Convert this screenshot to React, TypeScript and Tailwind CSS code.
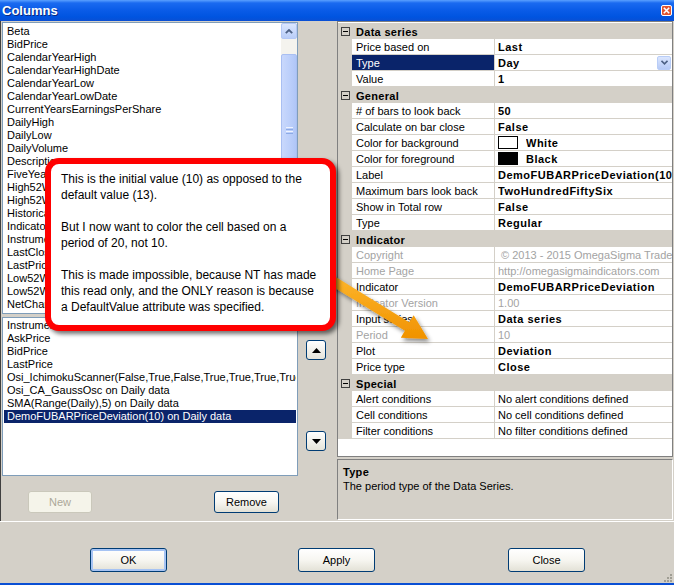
import React from "react";

type Prop = {
  name: string;
  value: string;
  bold?: boolean;
  grey?: boolean;
  selected?: boolean;
  dropdown?: boolean;
  swatch?: string;
};

type Section = { title: string; rows: Prop[] };

const topItems = [
  "Beta",
  "BidPrice",
  "CalendarYearHigh",
  "CalendarYearHighDate",
  "CalendarYearLow",
  "CalendarYearLowDate",
  "CurrentYearsEarningsPerShare",
  "DailyHigh",
  "DailyLow",
  "DailyVolume",
  "Description",
  "FiveYearGrowthPercent",
  "High52Weeks",
  "High52WeeksDate",
  "HistoricalVolatility",
  "IndicatorName",
  "InstrumentName",
  "LastClose",
  "LastPrice",
  "Low52Weeks",
  "Low52WeeksDate",
  "NetChange",
  "NetChangePercent",
];

const bottomItems = [
  "Instrument",
  "AskPrice",
  "BidPrice",
  "LastPrice",
  "Osi_IchimokuScanner(False,True,False,True,True,True,True,False) on Daily data",
  "Osi_CA_GaussOsc on Daily data",
  "SMA(Range(Daily),5) on Daily data",
  "DemoFUBARPriceDeviation(10) on Daily data",
];

const sections: Section[] = [
  {
    title: "Data series",
    rows: [
      { name: "Price based on", value: "Last", bold: true },
      { name: "Type", value: "Day", bold: true, selected: true, dropdown: true },
      { name: "Value", value: "1", bold: true },
    ],
  },
  {
    title: "General",
    rows: [
      { name: "# of bars to look back", value: "50", bold: true },
      { name: "Calculate on bar close", value: "False", bold: true },
      { name: "Color for background", value: "White", bold: true, swatch: "white" },
      { name: "Color for foreground", value: "Black", bold: true, swatch: "black" },
      { name: "Label", value: "DemoFUBARPriceDeviation(10) on Daily data", bold: true },
      { name: "Maximum bars look back", value: "TwoHundredFiftySix", bold: true },
      { name: "Show in Total row", value: "False", bold: true },
      { name: "Type", value: "Regular", bold: true },
    ],
  },
  {
    title: "Indicator",
    rows: [
      { name: "Copyright", value: "\u00a0© 2013 - 2015 OmegaSigma Tradecraft", grey: true },
      { name: "Home Page", value: "http://omegasigmaindicators.com", grey: true },
      { name: "Indicator", value: "DemoFUBARPriceDeviation", bold: true },
      { name: "Indicator Version", value: "1.00", grey: true },
      { name: "Input series", value: "Data series", bold: true },
      { name: "Period", value: "10", grey: true },
      { name: "Plot", value: "Deviation", bold: true },
      { name: "Price type", value: "Close", bold: true },
    ],
  },
  {
    title: "Special",
    rows: [
      { name: "Alert conditions", value: "No alert conditions defined" },
      { name: "Cell conditions", value: "No cell conditions defined" },
      { name: "Filter conditions", value: "No filter conditions defined" },
    ],
  },
];

function XpButton({
  label,
  width,
  disabled,
  isDefault,
}: {
  label: string;
  width: string;
  disabled?: boolean;
  isDefault?: boolean;
}) {
  if (disabled) {
    return (
      <div
        className={`${width} h-full flex items-center justify-center rounded-[3px] border border-[#cac8bb] bg-[#f5f4ea] text-[#aca899]`}
      >
        {label}
      </div>
    );
  }
  return (
    <div
      className={`${width} h-full flex items-center justify-center rounded-[3px] border border-[#003c74] bg-gradient-to-b from-white via-[#f7f6f1] to-[#e3e1d6] ${
        isDefault ? "shadow-[inset_0_0_0_2px_#a6c3f3]" : ""
      }`}
    >
      {label}
    </div>
  );
}

function ArrowButton({ up }: { up?: boolean }) {
  return (
    <div className="w-[20px] h-[20px] flex items-center justify-center rounded-[3px] border border-[#003c74] bg-gradient-to-b from-white to-[#e6e4da]">
      <svg width="9" height="5" viewBox="0 0 9 5">
        {up ? <polygon points="0,5 9,5 4.5,0" fill="#000" /> : <polygon points="0,0 9,0 4.5,5" fill="#000" />}
      </svg>
    </div>
  );
}

function PropRow({ p }: { p: Prop }) {
  return (
    <div className="flex h-[16px]">
      <div className="w-[14px] bg-[#d4d0c8]" />
      <div
        className={`w-[143px] border-b border-r border-[#d4d0c8] pl-[4px] pt-[2px] leading-[13px] whitespace-nowrap overflow-hidden ${
          p.selected ? "bg-[#0a246a] text-white" : p.grey ? "text-[#a3a3a3]" : "text-black"
        }`}
      >
        {p.name}
      </div>
      <div className="flex-1 min-w-0 flex items-center border-b border-[#d4d0c8] pl-[3px] whitespace-nowrap overflow-hidden">
        {p.swatch === "white" && (
          <div className="w-[20px] h-[13px] mr-[8px] shrink-0 border border-black bg-white" />
        )}
        {p.swatch === "black" && <div className="w-[20px] h-[13px] mr-[8px] shrink-0 bg-black" />}
        <span
          className={`flex-1 min-w-0 overflow-hidden pt-[2px] leading-[13px] ${
            p.bold ? "font-bold tracking-[0.5px]" : ""
          } ${p.grey ? "text-[#a3a3a3]" : "text-black"}`}
        >
          {p.value}
        </span>
        {p.dropdown && (
          <div className="w-[14px] h-[14px] mr-[1px] shrink-0 flex items-center justify-center rounded-[2px] border border-[#b9cdf7] bg-gradient-to-b from-[#dbe6fe] to-[#b6caf6]">
            <svg width="7" height="5" viewBox="0 0 7 5">
              <polyline points="0.5,0.8 3.5,3.8 6.5,0.8" fill="none" stroke="#4d6185" strokeWidth="1.6" />
            </svg>
          </div>
        )}
      </div>
    </div>
  );
}

function CategoryRow({ title }: { title: string }) {
  return (
    <div className="flex h-[16px] items-center bg-[#d4d0c8]">
      <div className="ml-[3px] w-[9px] h-[9px] shrink-0 flex items-center justify-center border border-[#404040]">
        <div className="w-[5px] h-px bg-black" />
      </div>
      <span className="ml-[6px] pt-[2px] leading-[13px] font-bold tracking-[0.3px]">{title}</span>
    </div>
  );
}

export default function App() {
  return (
    <div className="relative w-[674px] h-[585px] overflow-hidden flex flex-col bg-[#d4d0c8] text-[11px] text-black font-['Liberation_Sans',Arial,sans-serif]">
      {/* Title bar */}
      <div className="h-[21px] shrink-0 flex items-center justify-between bg-[linear-gradient(to_bottom,#5aa0ff_0px,#1a6af0_3px,#0a5ce8_10px,#0054e0_17px,#0a4fd4_21px)]">
        <span className="pl-[2px] text-[13px] font-bold text-white [text-shadow:1px_1px_0_#0a2a80]">Columns</span>
        <div className="mr-[2px] w-[11px] h-[11px] flex items-center justify-center rounded-[2px] border border-white bg-[#e2542e]">
          <svg width="7" height="7" viewBox="0 0 7 7">
            <path d="M0.8 0.8 L6.2 6.2 M6.2 0.8 L0.8 6.2" stroke="white" strokeWidth="1.6" />
          </svg>
        </div>
      </div>

      {/* Main split area */}
      <div className="h-[501px] shrink-0 flex border-b border-white">
        {/* Left panel */}
        <div className="w-[337px] shrink-0 flex border-l border-[#404040]">
          <div className="ml-[1px] w-[296px] flex flex-col pt-[1px]">
            {/* Available columns */}
            <div className="h-[292px] flex border border-[#7f9db9] bg-white">
              <div className="flex-1 min-w-0 overflow-hidden pt-[2px] pl-[4px]">
                {topItems.map((item) => (
                  <div key={item} className="h-[13px] leading-[13px] whitespace-nowrap">
                    {item}
                  </div>
                ))}
              </div>
              <div className="w-[16px] shrink-0 flex flex-col bg-[#f4f3ee]">
                <div className="h-[16px] flex items-center justify-center rounded-[2px] border border-[#b4c8f6] bg-gradient-to-b from-[#dce7fe] to-[#b9cdf8]">
                  <svg width="8" height="5" viewBox="0 0 8 5">
                    <polyline points="0.8,4.2 4,1 7.2,4.2" fill="none" stroke="#4d6185" strokeWidth="1.8" />
                  </svg>
                </div>
                <div className="h-[15px]" />
                <div className="h-[152px] flex items-center justify-center rounded-[2px] border border-[#a9bff2] bg-gradient-to-r from-[#c9d8fc] via-[#bdd0fb] to-[#b0c6f7]">
                  <div className="flex flex-col gap-[1px]">
                    <div className="w-[7px] h-px bg-[#eef3fe]" />
                    <div className="w-[7px] h-px bg-[#8caae6]" />
                    <div className="w-[7px] h-px bg-[#eef3fe]" />
                    <div className="w-[7px] h-px bg-[#8caae6]" />
                  </div>
                </div>
                <div className="flex-1" />
                <div className="h-[16px] flex items-center justify-center rounded-[2px] border border-[#b4c8f6] bg-gradient-to-b from-[#dce7fe] to-[#b9cdf8]">
                  <svg width="8" height="5" viewBox="0 0 8 5">
                    <polyline points="0.8,0.8 4,4 7.2,0.8" fill="none" stroke="#4d6185" strokeWidth="1.8" />
                  </svg>
                </div>
              </div>
            </div>

            {/* Selected columns */}
            <div className="mt-[3px] h-[159px] border border-[#7f9db9] bg-white overflow-hidden pt-[1px] px-[1px]">
              {bottomItems.map((item, i) => (
                <div
                  key={item}
                  className={`h-[13px] leading-[13px] pl-[3px] whitespace-nowrap overflow-hidden ${
                    i === bottomItems.length - 1 ? "bg-[#0a246a] text-white" : ""
                  }`}
                >
                  {item}
                </div>
              ))}
            </div>

            <div className="mt-[15px] h-[22px] flex">
              <div className="ml-[26px]">
                <XpButton label="New" width="w-[64px]" disabled />
              </div>
              <div className="ml-[122px]">
                <XpButton label="Remove" width="w-[65px]" />
              </div>
            </div>
          </div>

          {/* Move up / down */}
          <div className="flex-1 flex flex-col pl-[8px] pt-[319px]">
            <ArrowButton up />
            <div className="mt-[71px]">
              <ArrowButton />
            </div>
          </div>
        </div>

        {/* Right panel: property grid */}
        <div className="flex-1 min-w-0 flex flex-col pr-[1px]">
          <div className="h-[436px] flex flex-col border border-[#808080] bg-white overflow-hidden pt-[1px]">
            {sections.map((s) => (
              <div key={s.title}>
                <CategoryRow title={s.title} />
                {s.rows.map((r) => (
                  <PropRow key={s.title + r.name} p={r} />
                ))}
              </div>
            ))}
          </div>
          <div className="mt-[2px] h-[61px] border border-t-[#808080] border-l-[#808080] border-b-white border-r-white pl-[5px] pt-[5px]">
            <div className="font-bold leading-[14px] tracking-[0.3px]">Type</div>
            <div className="leading-[14px]">The period type of the Data Series.</div>
          </div>
        </div>
      </div>

      {/* Dialog buttons */}
      <div className="flex-1 flex flex-col">
        <div className="flex-1 flex items-start pt-[26px] pl-[90px]">
          <div className="h-[24px]">
            <XpButton label="OK" width="w-[77px]" isDefault />
          </div>
          <div className="h-[24px] ml-[131px]">
            <XpButton label="Apply" width="w-[77px]" />
          </div>
          <div className="h-[24px] ml-[133px]">
            <XpButton label="Close" width="w-[77px]" />
          </div>
        </div>
        <div className="h-[2px] bg-[#0a4fd4]" />
      </div>

      {/* Resize grip */}
      <div className="absolute right-[2px] bottom-[3px] grid grid-cols-3 gap-[1px]">
        <div className="w-[2px] h-[2px]" />
        <div className="w-[2px] h-[2px]" />
        <div className="w-[2px] h-[2px] bg-[#a09e94]" />
        <div className="w-[2px] h-[2px]" />
        <div className="w-[2px] h-[2px] bg-[#a09e94]" />
        <div className="w-[2px] h-[2px] bg-[#a09e94]" />
        <div className="w-[2px] h-[2px] bg-[#a09e94]" />
        <div className="w-[2px] h-[2px] bg-[#a09e94]" />
        <div className="w-[2px] h-[2px] bg-[#a09e94]" />
      </div>

      {/* Annotation arrow */}
      <svg className="absolute left-0 top-0 z-10 pointer-events-none" width="674" height="585" viewBox="0 0 674 585">
        <defs>
          <linearGradient id="orange" x1="0" y1="0" x2="0" y2="1">
            <stop offset="0" stopColor="#ffbb33" />
            <stop offset="1" stopColor="#f09200" />
          </linearGradient>
          <filter id="shadow" x="-20%" y="-20%" width="140%" height="140%">
            <feDropShadow dx="2" dy="3" stdDeviation="2" floodColor="#000" floodOpacity="0.45" />
          </filter>
        </defs>
        <polygon
          points="317.6,265.7 409.1,322.2 413.7,315.3 428,339 400.8,337.7 404.9,330.8 312.4,274.3"
          fill="url(#orange)"
          filter="url(#shadow)"
        />
      </svg>

      {/* Annotation callout */}
      <div className="absolute z-20 left-[45px] top-[158px] w-[291px] h-[173px] rounded-[14px] border-[6px] border-[#ff0000] bg-white pl-[10px] pt-[7px] text-[12px] leading-[16px] shadow-[3px_3px_4px_rgba(0,0,0,0.55)]">
        <p>This is the initial value (10) as opposed to the</p>
        <p>default value (13).</p>
        <p>&nbsp;</p>
        <p>But I now want to color the cell based on a</p>
        <p>period of 20, not 10.</p>
        <p>&nbsp;</p>
        <p>This is made impossible, because NT has made</p>
        <p>this read only, and the ONLY reason is because</p>
        <p>a DefaultValue attribute was specified.</p>
      </div>
    </div>
  );
}
